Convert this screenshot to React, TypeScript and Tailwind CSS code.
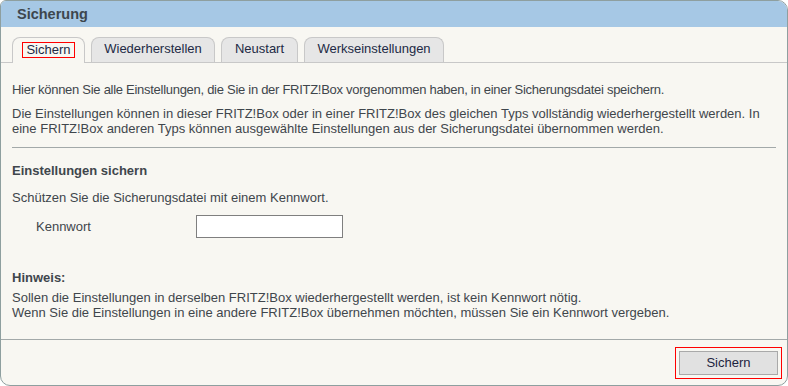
import React from "react";

export default function App() {
  const font = { fontFamily: '"Liberation Sans", Arial, sans-serif' };
  return (
    <div style={font} className="w-[788px] h-[386px] bg-white">
      <div className="w-[788px] h-[386px] border border-[#8e9f9f] rounded-[10px] rounded-tl-[6px] overflow-hidden bg-[#f8f7f2] flex flex-col">
        <div className="h-[26px] shrink-0 bg-[#a6c8e5] pl-[16px] pt-[1px] flex items-center text-[14.5px] font-bold text-[#3d464e]">
          Sicherung
        </div>
        <div className="mt-[10px] h-[26px] shrink-0 flex items-end pl-[11px] gap-[6px] border-b border-[#c8c8c8]">
          <div className="relative -mb-px h-[26px] w-[73px] rounded-t-[8px] border border-b-0 border-[#c8c8c8] bg-[#f8f7f2] flex items-center justify-center pb-[2px]">
            <span className="border border-[#ff0000] px-[3px] leading-[14px] text-[13px] text-[#222a45]">Sichern</span>
          </div>
          <div className="h-[25px] w-[124px] rounded-t-[8px] border border-b-0 border-[#c8c8c8] bg-[#e6e6e6] flex items-center justify-center pb-[2px] text-[13px] text-[#222a45]">
            Wiederherstellen
          </div>
          <div className="h-[25px] w-[77px] rounded-t-[8px] border border-b-0 border-[#c8c8c8] bg-[#e6e6e6] flex items-center justify-center pb-[2px] text-[13px] text-[#222a45]">
            Neustart
          </div>
          <div className="h-[25px] w-[140px] rounded-t-[8px] border border-b-0 border-[#c8c8c8] bg-[#e6e6e6] flex items-center justify-center pb-[2px] text-[13px] text-[#222a45]">
            Werkseinstellungen
          </div>
        </div>
        <div className="flex-1 px-[11px] text-[13px] leading-[15px] text-[#3f464c]">
          <p className="mt-[19px] tracking-[-0.28px]">
            Hier können Sie alle Einstellungen, die Sie in der FRITZ!Box vorgenommen haben, in einer Sicherungsdatei speichern.
          </p>
          <p className="mt-[9px]">
            Die Einstellungen können in dieser FRITZ!Box oder in einer FRITZ!Box des gleichen Typs vollständig wiederhergestellt werden. In eine FRITZ!Box anderen Typs können ausgewählte Einstellungen aus der Sicherungsdatei übernommen werden.
          </p>
          <div className="mt-[11px] h-px bg-[#a3a9a9]" />
          <p className="mt-[15px] font-bold">Einstellungen sichern</p>
          <p className="mt-[12px]">Schützen Sie die Sicherungsdatei mit einem Kennwort.</p>
          <div className="mt-[10px] flex items-center">
            <span className="pl-[24px] w-[184px]">Kennwort</span>
            <div className="w-[147px] h-[23px] border border-[#7f7f7f] bg-white" />
          </div>
          <p className="mt-[32px] font-bold">Hinweis:</p>
          <p className="mt-[5px]">
            Sollen die Einstellungen in derselben FRITZ!Box wiederhergestellt werden, ist kein Kennwort nötig.
            <br />
            Wenn Sie die Einstellungen in eine andere FRITZ!Box übernehmen möchten, müssen Sie ein Kennwort vergeben.
          </p>
        </div>
        <div className="h-[46px] shrink-0 border-t border-[#a3a9a9] flex items-center justify-end pr-[5px]">
          <div className="border border-[#ff0000] p-[3px] mt-[1px]">
            <div className="w-[99px] h-[24px] border border-[#a9a9a9] bg-[#e1e1e1] flex items-center justify-center text-[13px] text-[#1d2440]">
              Sichern
            </div>
          </div>
        </div>
      </div>
    </div>
  );
}
